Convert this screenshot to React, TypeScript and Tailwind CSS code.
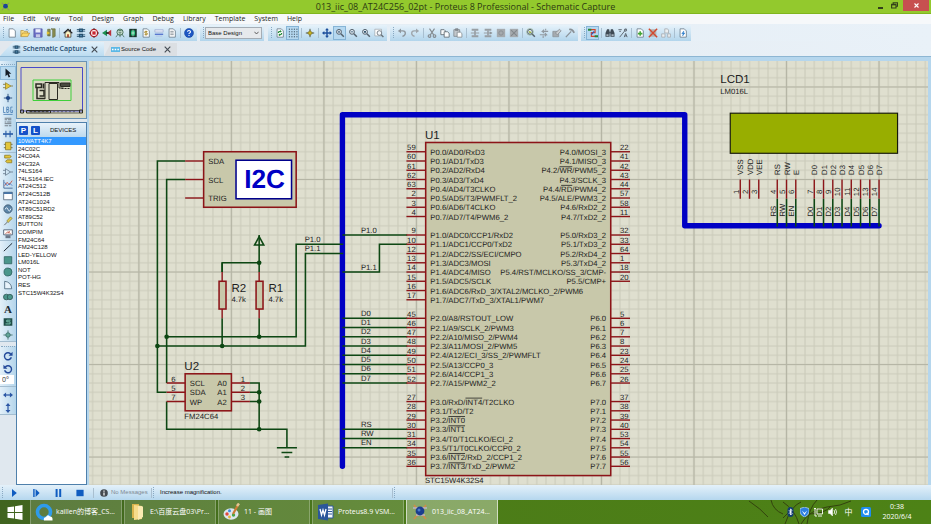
import type { ReactNode } from "react";
import clsx from "clsx";

/* ---------- small drawings, all on a 12 x 12 grid ---------- */

const page = (
  <path d="M2.5 1h5l2.5 2.5V11h-7.5z" fill="#fff" stroke="#5d6f80" strokeWidth="0.9" />
);

const lens = (
  <g fill="none" stroke="#55616c">
    <circle cx="4.8" cy="4.6" r="2.9" strokeWidth="1.2" fill="#e4eef6" />
    <path d="M7 7l3.6 3.6" strokeWidth="1.8" />
  </g>
);

const chipBlue = (
  <g fill="#27506f">
    <path d="M3.5.5h5v4.500h-5zM3.500 7h5v4.500h-5z" />
    <path d="M1 1.800h10M1 3.800h10M1 8.200h10M1 10.200h10" stroke="#27506f" strokeWidth="1" />
    <path d="M5 2.800h2M5 9.200h2" stroke="#6fb1d8" />
  </g>
);

const grayBlock = (
  <g stroke="#999fa4" fill="none">
    <path d="M2 2h8M2 10h8" strokeWidth="2.400" />
    <path d="M1 6h10" strokeWidth="1.200" />
    <path d="M6 3v6" strokeWidth="2" />
  </g>
);

const art: Record<string, ReactNode> = {
  new: page,
  open: (
    <g stroke="#a8812a" strokeWidth="0.7">
      <path d="M1 10V3h3l1 1h4v2" fill="#f8de83" />
      <path d="M1 10.3L3 6h8.5L9.2 10.3z" fill="#fbd764" />
      <path d="M7 2.2q2-1.6 3 .8" fill="none" stroke="#3a7bb5" />
    </g>
  ),
  save: (
    <g>
      <path d="M1 1h10v10H1z" fill="#6b6fc4" stroke="#4a4f9c" strokeWidth="0.7" />
      <path d="M3 1.4h6v4H3z" fill="#e9ecfa" />
      <path d="M3.5 7.5h5V11h-5z" fill="#c5c8e6" />
    </g>
  ),
  exit: (
    <g>
      <path d="M2 1.5h3v8H2zM6 1h5v9l-3 1.5V2z" fill="#8b8f51" stroke="#5c5f34" strokeWidth="0.7" />
      <path d="M1 4l4 2-4 2z" fill="#e2c230" />
    </g>
  ),
  home: (
    <g>
      <path d="M2.5 6v5h7V6L6 3z" fill="#fbf3c1" stroke="#222" strokeWidth="0.8" />
      <path d="M.8 6.3L6 1.5l5.2 4.8" fill="none" stroke="#222" strokeWidth="1.3" />
      <path d="M5 7.5h2V11H5z" fill="#a13a25" />
      <path d="M8.3 1.6h1.2v2H8.3z" fill="#222" />
    </g>
  ),
  chips: chipBlue,
  pcb: (
    <g>
      <circle cx="6" cy="6" r="4.3" fill="#fff" stroke="#b5242c" strokeWidth="1.6" />
      <path d="M4 4h4v4H4z" fill="#c92530" />
      <path d="M6 0v2M6 10v2M0 6h2M10 6h2" stroke="#333" strokeWidth="1" />
    </g>
  ),
  view3d: (
    <g>
      <path d="M0 6l6-4v8z" fill="#1c8d50" />
      <path d="M6 6l5-4v8z" fill="#b9323c" />
      <path d="M5 5h3v2H5z" fill="#222" />
    </g>
  ),
  gerber: (
    <g fill="none" stroke="#47705c">
      <circle cx="6" cy="5" r="3.7" strokeWidth="1.2" fill="#dbeee0" />
      <path d="M1 11l3-4M11 11L8 7M4 3h4M4 5h4M6 5v6" strokeWidth="1" />
    </g>
  ),
  explorer: (
    <g>
      <path d="M1.5 1h9v10h-9z" fill="#16352a" />
      <path d="M3.5 3h5v6h-5z" fill="#1eb36e" />
      <path d="M6 2v8M4 6h4" stroke="#fff" strokeWidth="0.7" />
    </g>
  ),
  bom: (
    <g>
      {page}
      <path d="M7.7 4.2H5.3q-1 0-1 .9t1 .9h1.5q1 0 1 1t-1 1H4.3M6 3.2v5.8" fill="none" stroke="#a48520" />
    </g>
  ),
  source: (
    <g>
      <path d="M1 2h10v3H1z" fill="#dfe5f5" stroke="#8c99c6" strokeWidth="0.6" />
      <path d="M1 7.5h10" stroke="#4463c8" strokeWidth="1.4" />
      <path d="M2 9.7h8" stroke="#a9b7df" strokeWidth="0.8" />
    </g>
  ),
  notes: (
    <g>
      {page}
      <path d="M4 4h4M4 6h4M4 8h4" stroke="#7b848c" />
    </g>
  ),
  help: (
    <g>
      <circle cx="6" cy="6" r="5.4" fill="#1d57c4" stroke="#0d3a94" strokeWidth="0.6" />
      <path d="M4.2 4.6q.1-1.7 1.8-1.7t1.8 1.5q0 1-1 1.5t-.8 1.3M6 8.4v1.2" fill="none" stroke="#fff" strokeWidth="1.3" />
    </g>
  ),
  redraw: (
    <g>
      {page}
      <path d="M4 6q0-2 2.6-2M8 6q0 2.2-2.6 2.2" fill="none" stroke="#208a35" strokeWidth="1.3" />
      <path d="M6 2.4l2.2 1.7L6 5.5zM6 6.7L3.8 8.3 6 9.7z" fill="#208a35" />
    </g>
  ),
  grid: (
    <g fill="#4e6474">
      {[1.5, 4.5, 7.5, 10.5].map((y) =>
        [1, 4, 7, 10].map((x) => <rect key={`${x}-${y}`} x={x} y={y - 0.7} width="1.4" height="1.4" />),
      )}
    </g>
  ),
  origin: (
    <g>
      <path d="M6 1v10M1 6h10" stroke="#3b3b22" strokeWidth="1" />
      <path d="M6 3l3 3-3 3-3-3z" fill="#c5b021" stroke="#565019" strokeWidth="0.7" />
    </g>
  ),
  pan: (
    <g fill="#1c4f9c">
      <path d="M6 0l2.3 2.8H3.7zM6 12l2.3-2.8H3.7zM0 6l2.8-2.3v4.6zM12 6L9.2 3.7v4.6z" />
      <path d="M6 2v8M2 6h8" stroke="#1c4f9c" strokeWidth="1.7" />
    </g>
  ),
  zoomIn: (
    <g>
      {lens}
      <path d="M4.8 3.2V6M3.4 4.6h2.8" stroke="#34556e" strokeWidth="0.9" />
    </g>
  ),
  zoomOut: (
    <g>
      {lens}
      <path d="M3.3 4.6h3" stroke="#34556e" strokeWidth="1" />
    </g>
  ),
  zoomAll: (
    <g>
      {lens}
      <path d="M3.6 3.6h2.4v2H3.6z" fill="#34556e" />
    </g>
  ),
  zoomArea: (
    <g>
      <path d="M1 1.5h8v8H1z" fill="#fff" stroke="#98a1a8" strokeWidth="0.8" />
      <circle cx="6.5" cy="6" r="2.8" fill="#f2f6fa" stroke="#6a747c" />
      <path d="M8.5 8l2.8 2.8" stroke="#6a747c" strokeWidth="1.7" />
    </g>
  ),
  undo: (
    <g>
      <path d="M3.5 3.5h3.5q3 0 3 2.7T6.5 10" fill="none" stroke="#8e969d" strokeWidth="1.6" />
      <path d="M1 3.5L4.8.7v5.6z" fill="#8e969d" />
    </g>
  ),
  redo: (
    <g>
      <path d="M8.5 3.5H5q-3 0-3 2.7T5.5 10" fill="none" stroke="#9fa6ac" strokeWidth="1.6" />
      <path d="M11 3.5L7.2.7v5.6z" fill="#9fa6ac" />
    </g>
  ),
  cut: (
    <g fill="none" stroke="#83898e" strokeWidth="1.3">
      <path d="M3 .8l5 7.5M9 .8L4 8.3" />
      <circle cx="3" cy="9.6" r="1.6" />
      <circle cx="9" cy="9.6" r="1.6" />
    </g>
  ),
  copy: (
    <g fill="#fafcfd" stroke="#525b63" strokeWidth="0.9">
      <path d="M1 2h4l1.5 1.5V8H1z" />
      <path d="M5 4.5h4L11 6.3V11H5z" />
    </g>
  ),
  paste: (
    <g stroke="#7b8288" strokeWidth="0.9">
      <path d="M1 2h7v8H1z" fill="#c3c8cc" />
      <path d="M3 .9h3v2H3z" fill="#8b9197" />
      <path d="M5 5h4l1.7 1.6V11H5z" fill="#fff" />
    </g>
  ),
  block: grayBlock,
  blockMove: (
    <g>
      {grayBlock}
      <path d="M8 4l3 2-3 2z" fill="#8d9398" />
    </g>
  ),
  blockTurn: (
    <g>
      <path d="M1 1h10v10H1z" fill="#a5aaae" />
      <circle cx="6" cy="6" r="2.6" fill="none" stroke="#8c9196" strokeWidth="1.2" />
    </g>
  ),
  blockDelete: (
    <g>
      <path d="M1 1h10v10H1z" fill="#a5aaae" />
      <path d="M2.5 2.5l7 7M9.500 2.500l-7 7" stroke="#83888c" strokeWidth="1.3" />
    </g>
  ),
  pick: (
    <g>
      {lens}
      <path d="M3 3.7l4 1-2.5 2z" fill="#92a928" />
      <circle cx="4.800" cy="4.600" r="4" fill="none" stroke="#74906a" strokeWidth="0.6" />
    </g>
  ),
  make: (
    <g fill="none" stroke="#9299a0" strokeWidth="1.3">
      <path d="M1 8h8l-2-2M9 8l-2 2M11 4H4l2-2M4 4l2 2" />
      <path d="M8 1v2M5 9v3" />
    </g>
  ),
  pack: (
    <g>
      <path d="M1 4h7v6.500H1z" fill="#a5abb0" stroke="#858b91" strokeWidth="0.8" />
      <path d="M4 6l5-4.500 2 2L6.500 8z" fill="#c9cdd0" stroke="#7b8187" strokeWidth="0.8" />
    </g>
  ),
  hammer: (
    <g stroke="#8a9197" fill="none">
      <path d="M1 11l6.500-7" strokeWidth="1.500" />
      <path d="M5 1.800q4-.8 6 4" strokeWidth="2" />
    </g>
  ),
  router: (
    <g fill="none">
      <path d="M3 2h5.500v3.500H4V10h5" stroke="#d2442c" strokeWidth="1.4" />
      <path d="M7.500 4L4 8" stroke="#2759bf" strokeWidth="1.4" />
      <path d="M0 1h4v2.400H0zM8 8.600h4V11H8z" fill="#268538" />
    </g>
  ),
  find: (
    <g fill="#3f4a54">
      <path d="M2.500 1.500H5l.5 3V10.500H.6V6zM9.500 1.500H7l-.5 3V10.500h4.900V6z" />
      <path d="M5 4.500h2v2H5z" />
      <path d="M1.600 7.500h2.600v2H1.600zM7.800 7.500h2.600v2H7.800z" fill="#a7b3bd" />
    </g>
  ),
  property: (
    <g fill="none" stroke="#59636c" strokeWidth="1.1">
      <path d="M.5 2h4M1.500 4h2M2 11l8-10M7.500 11l1.700-4.500L11 11M8 9.500h2.500" />
      <circle cx="9" cy="2.500" r="1.400" />
    </g>
  ),
  addSheet: (
    <g>
      {page}
      <path d="M6.200 4v5.400M3.500 6.700h5.400" stroke="#42a535" strokeWidth="1.900" />
    </g>
  ),
  removeSheet: (
    <g>
      <path d="M2 1.500h8v9H2z" fill="#b4b1b0" />
      <path d="M1 1l10 10M11 1L1 11" stroke="#d2492f" strokeWidth="1.700" />
    </g>
  ),
  parentSheet: (
    <g fill="#eceff1" stroke="#a1a7ac" strokeWidth="0.9">
      <path d="M4.500 1h3.300L9 2.500V6H4.500zM.8 7h4v4h-4zM8 7h3.300v4H8z" />
    </g>
  ),
  report: (
    <g>
      {page}
      <path d="M7 3.500L4.500 6.800h1.800L5.500 9.500 8.200 6H6.400z" fill="#2b7ccb" stroke="#2b7ccb" strokeWidth="0.600" />
    </g>
  ),
  arrow: <path d="M3 .5l7 6.500H7l1.600 3.500-1.800.9L5.300 7.800 3 10z" fill="#151d26" />,
  component: (
    <g>
      <path d="M0 4h4M0 8h4M9 6h3" stroke="#7d7443" />
      <path d="M3 2l6.500 4L3 10z" fill="#e3c63b" stroke="#8c7a20" strokeWidth="0.8" />
    </g>
  ),
  junction: (
    <g>
      <path d="M6 1v10M1 6h10" stroke="#284a7a" strokeWidth="1.100" />
      <circle cx="6" cy="6" r="2.500" fill="#1c4689" />
    </g>
  ),
  label: (
    <g fill="none" stroke="#4a80b5" strokeWidth="1">
      <path d="M.5 2v7h2.500M4.500 2.500h2q1 1.500-.5 3H4.500zM4.500 5.500h2.300q1 1.700-.5 3.500H4.500zM11.500 2.500H9.300v6.500h2.200V6.500h-1M.5 11.300h11" />
    </g>
  ),
  script: (
    <path d="M2 1.500h8M2 3.300h3M6 3.300h4M2 6h2M5 6h5M2 8h8M2 10.500h4M7 10.500h3" stroke="#6d7780" strokeWidth="1.100" />
  ),
  bus: (
    <g stroke="#2c5ea8" fill="none">
      <path d="M0 6h12" strokeWidth="2" />
      <path d="M3.500 2v8M8.500 2v8" strokeWidth="1.300" />
    </g>
  ),
  subcircuit: (
    <g>
      <path d="M3 1.500h6.500v9H3z" fill="#e2c53a" stroke="#8b7722" strokeWidth="0.9" />
      <path d="M1 4h2M1 8h2M9.500 4h2M9.500 8h2" stroke="#6e6633" />
    </g>
  ),
  terminal: (
    <g fill="#e2c53a" stroke="#8b7722" strokeWidth="0.900">
      <path d="M2 1.500h6L10 3 8 4.800H2zM10.500 7H5L3 8.800l2 1.700h5.500z" />
    </g>
  ),
  devicePin: (
    <g fill="none" stroke="#5e7184" strokeWidth="0.900">
      <path d="M3 2l6 4-6 4zM0 4h3M0 8h3M9 6h3" />
    </g>
  ),
  graph: (
    <g fill="none">
      <path d="M1 1v10h10.500" stroke="#3a5c8d" />
      <path d="M2 8l3-4 2.500 3L11 2" stroke="#c4513e" />
      <path d="M2 4l3 4 3-3 3 3" stroke="#3e6fc4" />
    </g>
  ),
  window: (
    <g>
      <path d="M.8 1.500h10.400v9H.8z" fill="#fff" stroke="#44596e" strokeWidth="0.900" />
      <path d="M.8 1.500h10.400v2H.8z" fill="#37699f" />
    </g>
  ),
  generator: (
    <g>
      <circle cx="6" cy="6" r="5" fill="#5d86a8" stroke="#3a536b" strokeWidth="0.900" />
      <path d="M2.500 6.500q1.700-4 3.500 0t3.500-1" fill="none" stroke="#e9f3fa" strokeWidth="1.200" />
    </g>
  ),
  probe: (
    <g>
      <path d="M1.500 11l4-4" stroke="#444" strokeWidth="0.900" />
      <path d="M4.500 6l4.500-5 2 2-4.800 4.700z" fill="#e0cd55" stroke="#857634" strokeWidth="0.800" />
    </g>
  ),
  meter: (
    <g>
      <path d="M.8 1h10.400v6H.8z" fill="#fff" stroke="#47566a" />
      <path d="M3 6q3-5 6 0M6 5.500l2-3" fill="none" stroke="#ba4a36" strokeWidth="0.900" />
      <path d="M3 7.500h6V11H3z" fill="#6b7889" />
    </g>
  ),
  line: <path d="M1 11L11 1.500" stroke="#1e2b36" strokeWidth="1.200" />,
  box: <path d="M1.500 2h9v8.500h-9z" fill="#4a968b" stroke="#2a5d5b" strokeWidth="0.900" />,
  circle: <circle cx="6" cy="6" r="4.800" fill="#4a968b" stroke="#2a5d5b" strokeWidth="0.900" />,
  arc: <path d="M2 1.500v9h8.500Q10 2.500 2 1.500z" fill="#e8f3fb" stroke="#3c5a70" strokeWidth="0.900" />,
  path: (
    <g fill="#4a968b" stroke="#28504f" strokeWidth="0.900">
      <circle cx="4" cy="6" r="3.400" />
      <circle cx="8.300" cy="6" r="3.200" />
    </g>
  ),
  symbol: (
    <g>
      <path d="M.8 1.500h10.400v9H.8z" fill="#1f4d47" />
      <path d="M9 3.800H4.500v2h4v2.500H3" fill="none" stroke="#7ecdb9" strokeWidth="1.100" />
    </g>
  ),
  marker: (
    <g>
      <path d="M6 .5v11M.5 6h11" stroke="#3a6a63" />
      <circle cx="6" cy="6" r="2.700" fill="#63a598" stroke="#2a5d5b" strokeWidth="0.800" />
    </g>
  ),
  turnCw: (
    <g>
      <path d="M9.500 4A4.200 4.200 0 1 0 10 7.500" fill="none" stroke="#244a9a" strokeWidth="1.700" />
      <path d="M11.500.8v5H6.700z" fill="#244a9a" />
    </g>
  ),
  turnCcw: (
    <g>
      <path d="M2.500 4A4.200 4.200 0 1 1 2 7.500" fill="none" stroke="#244a9a" strokeWidth="1.700" />
      <path d="M.5.8v5h4.800z" fill="#244a9a" />
    </g>
  ),
  mirrorX: (
    <g fill="#2c57a5">
      <path d="M0 6l3.700-3v6zM12 6L8.300 3v6z" />
      <path d="M3 6h6" stroke="#2c57a5" strokeWidth="1.500" />
    </g>
  ),
  mirrorY: (
    <g fill="#2c57a5">
      <path d="M6 0l3 3.700H3zM6 12l3-3.700H3z" />
      <path d="M6 3v6" stroke="#2c57a5" strokeWidth="1.500" />
    </g>
  ),
};

function Icon({ name, className = "size-[10px]" }: { name: string; className?: string }) {
  return (
    <svg viewBox="0 0 12 12" className={clsx("shrink-0", className)} aria-hidden="true">
      {art[name]}
    </svg>
  );
}

/* ---------- window chrome ---------- */

function TitleBar() {
  return (
    <header className="flex h-[14px] items-start border-b border-[#7fb51d] bg-[#93c92d]">
      <div className="flex h-full w-[56px] items-center">
        <svg viewBox="0 0 12 12" className="ml-px size-[9px]">
          <path d="M1 1l10 10M11 1L1 11" stroke="#8c8f6d" strokeWidth="1.400" />
          <circle cx="6" cy="5.500" r="3.200" fill="#1d4396" />
        </svg>
      </div>
      <h1 className="flex-1 text-center text-[9px] leading-[13px] text-[#2c3a12]">
        013_iic_08_AT24C256_02pt - Proteus 8 Professional - Schematic Capture
      </h1>
      <div className="flex h-[11px] w-[56px] items-center pr-[2px]">
        <button aria-label="Minimize" className="flex h-full w-[10px] items-center justify-center pt-1">
          <span className="h-[2px] w-[5px] bg-[#33401b]" />
        </button>
        <button aria-label="Restore" className="flex h-full flex-1 items-center justify-center">
          <svg viewBox="0 0 8 8" className="size-[7px]" fill="none" stroke="#33401b" strokeWidth="1.300">
            <path d="M2.500 2V.8h5v4H6M.7 2.700h5v4.200h-5z" />
            <path d="M.7 3.200h5" />
          </svg>
        </button>
        <button aria-label="Close" className="flex h-full w-[26px] items-center justify-center bg-[#c75050]">
          <svg viewBox="0 0 6 6" className="size-[5px]" stroke="#fff" strokeWidth="1.300">
            <path d="M.6.6l4.800 4.800M5.400.6L.6 5.400" />
          </svg>
        </button>
      </div>
    </header>
  );
}

const menus = ["File", "Edit", "View", "Tool", "Design", "Graph", "Debug", "Library", "Template", "System", "Help"];

function MenuBar() {
  return (
    <nav className="flex h-[10px] items-center gap-[9px] bg-[#f6f8fa] pl-[3px] text-[7px] leading-[10px] text-[#1c1c1c]">
      {menus.map((menu) => (
        <button key={menu}>{menu}</button>
      ))}
    </nav>
  );
}

function Grip() {
  return <span className="h-[11px] w-px border-l border-dotted border-[#8aa9c2]" />;
}

function Divider() {
  return (
    <span className="flex w-1 justify-center">
      <span className="h-[10px] w-px bg-[#a9bfd0]" />
    </span>
  );
}

function ToolGroup({ children }: { children: ReactNode }) {
  return (
    <div className="flex h-4 items-center bg-linear-to-b from-[#e6f2fa] to-[#b2d5ec] pr-[2px] pl-px">
      <span className="flex w-1 justify-center">
        <Grip />
      </span>
      {children}
    </div>
  );
}

function Tools({ names, active }: { names: string[]; active?: string }) {
  return names.map((name) => (
    <button
      key={name}
      aria-label={name}
      className={clsx(
        "flex h-[14px] w-[13px] items-center justify-center",
        name === active && "border border-[#86b4d6] bg-[#b5d8f0]",
      )}
    >
      <Icon name={name} />
    </button>
  ));
}

function Toolbar() {
  return (
    <div className="flex h-[17px] items-center bg-linear-to-r from-[#e2ecf4] to-[#e9f1f8]">
      <ToolGroup>
        <Tools names={["new", "open", "save", "exit"]} />
        <Divider />
        <Tools names={["home", "chips", "pcb", "view3d", "gerber", "explorer", "bom", "source", "notes"]} />
        <Divider />
        <Tools names={["help"]} />
      </ToolGroup>
      <div className="w-[3px]" />
      <ToolGroup>
        <div className="relative flex items-center">
          <select
            aria-label="Design variant"
            className="h-3 w-[57px] appearance-none border border-[#a5adb5] bg-[#e6e9ec] pl-[2px] font-[Liberation_Sans] text-[6px] leading-[10px] text-[#111]"
          >
            <option>Base Design</option>
          </select>
          <svg viewBox="0 0 6 4" className="pointer-events-none absolute right-[3px] h-1 w-[5px]" fill="none" stroke="#444">
            <path d="M.5.5L3 3.200 5.500.5" />
          </svg>
        </div>
      </ToolGroup>
      <div className="w-1" />
      <ToolGroup>
        <Tools names={["redraw", "grid"]} active="grid" />
        <Divider />
        <Tools names={["origin"]} />
        <Divider />
        <Tools names={["pan", "zoomIn", "zoomOut", "zoomAll", "zoomArea"]} active="zoomIn" />
      </ToolGroup>
      <div className="w-[3px]" />
      <ToolGroup>
        <Tools names={["undo", "redo"]} />
        <Divider />
        <Tools names={["cut", "copy", "paste"]} />
        <Divider />
        <Tools names={["block", "blockMove", "blockTurn", "blockDelete"]} />
        <Divider />
        <Tools names={["pick", "make", "pack", "hammer"]} />
      </ToolGroup>
      <div className="w-[3px]" />
      <ToolGroup>
        <Tools names={["router"]} active="router" />
        <Divider />
        <Tools names={["find", "property"]} />
        <Divider />
        <Tools names={["addSheet", "removeSheet", "parentSheet"]} />
        <Divider />
        <Tools names={["report"]} />
      </ToolGroup>
    </div>
  );
}

function CloseMark() {
  return (
    <svg viewBox="0 0 8 8" className="size-[7px]" stroke="#454c54" strokeWidth="1.300">
      <path d="M.8.8l6.400 6.400M7.200.8L.8 7.200" />
    </svg>
  );
}

function Tabs() {
  return (
    <div className="flex h-[15px] items-end bg-linear-to-r from-[#e2e8ee] to-[#e9f1f8]">
      <div className="flex h-[14px] w-[104px] items-center bg-linear-to-b from-[#e1f0fa] to-[#bcdcf1] pr-[6px] pl-3 [clip-path:polygon(13px_0,100%_0,100%_100%,0_100%)]">
        <Icon name="chips" className="size-[9px]" />
        <button className="flex-1 pl-[2px] text-left text-[7px] leading-[14px] font-semibold text-[#1f4a6e]">
          Schematic Capture
        </button>
        <button aria-label="Close Schematic Capture">
          <CloseMark />
        </button>
      </div>
      <div className="flex h-[13px] w-[73px] items-center bg-[#dbdfe3] pr-[6px] pl-[7px] [clip-path:polygon(7px_0,100%_0,100%_100%,0_100%)]">
        <svg viewBox="0 0 9 5" className="h-[5px] w-[9px]">
          <path d="M0 0h9v5H0z" fill="#5cb8e6" />
          <path d="M1 2.500h1.500M3.700 2.500h1.500M6.400 2.500h1.500" stroke="#fff" strokeWidth="1.400" />
        </svg>
        <button className="flex-1 pl-px text-left font-[Liberation_Sans] text-[6px] leading-[13px] whitespace-nowrap text-[#111]">
          Source Code
        </button>
        <button aria-label="Close Source Code">
          <CloseMark />
        </button>
      </div>
    </div>
  );
}

/* ---------- left side ---------- */

function ModeGroup({ names, className, active }: { names: string[]; className: string; active?: string }) {
  return (
    <div className={clsx("flex flex-col border-b border-[#a3bdd0]", className)}>
      {names.map((name) => (
        <button
          key={name}
          aria-label={name}
          className={clsx(
            "flex min-h-0 flex-1 items-center justify-center",
            name === active && "border border-[#8fbcdc] bg-[#b9daf0]",
          )}
        >
          {name === "text" ? (
            <span className="font-[Liberation_Serif] text-[11px] leading-none font-bold text-[#1d2a33]">A</span>
          ) : (
            <Icon name={name} />
          )}
        </button>
      ))}
    </div>
  );
}

function ModeBar() {
  return (
    <div className="w-4 bg-[#e0e8ef]">
      <div className="bg-linear-to-r from-[#e3f0f9] to-[#b4d5eb] pt-[3px]">
        <div className="mx-px border-t border-dotted border-[#8aa9c2] pt-px" />
        <ModeGroup
          className="h-[87px]"
          active="arrow"
          names={["arrow", "component", "junction", "label", "script", "bus", "subcircuit"]}
        />
        <ModeGroup
          className="h-[88px]"
          names={["terminal", "devicePin", "graph", "window", "generator", "probe", "meter"]}
        />
        <ModeGroup className="h-[101px]" names={["line", "box", "circle", "arc", "path", "text", "symbol", "marker"]} />
      </div>
      <div className="mt-1 bg-linear-to-r from-[#e3f0f9] to-[#b4d5eb]">
        <div className="mx-px border-t border-dotted border-[#8aa9c2] pt-[3px]" />
        <ModeGroup className="h-[25px] border-b-0" names={["turnCw", "turnCcw"]} />
        <input
          aria-label="Rotation angle"
          defaultValue="0°"
          className="block h-[9px] w-[14px] bg-white pl-[2px] text-[7px] leading-[9px] text-[#333]"
        />
        <div className="mt-[2px] border-t border-[#a3bdd0] pt-[2px]" />
        <ModeGroup className="h-[26px]" names={["mirrorX", "mirrorY"]} />
      </div>
    </div>
  );
}

const devices = [
  "10WATT4K7",
  "24C02C",
  "24C04A",
  "24C32A",
  "74LS164",
  "74LS164.IEC",
  "AT24C512",
  "AT24C512B",
  "AT24C1024",
  "AT89C51RD2",
  "AT89C52",
  "BUTTON",
  "COMPIM",
  "FM24C64",
  "FM24C128",
  "LED-YELLOW",
  "LM016L",
  "NOT",
  "POT-HG",
  "RES",
  "STC15W4K32S4",
];

function Overview() {
  return (
    <div className="h-[58px] border border-[#6a93b5] bg-[#dadac5]">
      <svg viewBox="0 0 68 56" className="block size-full">
        <path d="M3.500 5.500h61.500v43.500H3.500z" fill="none" stroke="#4a4ac8" />
        <path d="M15.500 18h38v20.500h-38z" fill="none" stroke="#3fd03a" />
        <g fill="none" stroke="#2a2a22">
          <path d="M31.500 21.500h8.500v16h-8.500zM27.500 37V20.500h14v5.500H46" />
          <path d="M18.500 22h5.500v3.500h-5.500zM19.500 26v10.500h8M22 28.500h4.500v5.500h-4.500M26 21.500v5" strokeWidth="1.500" />
          <path d="M43 21h9.500v3.500H43z" fill="#4a4a40" />
          <path d="M44 26.500h8" strokeDasharray="2 1" />
          <path d="M3 48h3v3H3zM9 48.500h24v2.500H9zM62 48h3v3h-3z" />
          <path d="M12 49.700h20" strokeDasharray="3 1" />
          <path d="M33 48.500h29M33 51h29" strokeWidth="0.700" />
          <path d="M36 49.700h24" strokeDasharray="1 3" />
        </g>
      </svg>
    </div>
  );
}

function SidePanel() {
  return (
    <aside className="flex w-[71px] flex-col gap-[3px] font-[Liberation_Sans]">
      <Overview />
      <section className="flex flex-1 flex-col border border-[#4f80ab] bg-white">
        <div className="flex h-[14px] items-center bg-linear-to-b from-[#e8f2fa] to-[#bcd9ee] pl-[2px]">
          <button className="size-[9px] rounded-[1px] bg-[#1450c8] text-[8px] leading-[9px] font-bold text-white">P</button>
          <button className="ml-[3px] size-[9px] rounded-[1px] bg-[#1450c8] text-[8px] leading-[9px] font-bold text-white">
            L
          </button>
          <h2 className="ml-[10px] text-[6px] text-[#111]">DEVICES</h2>
        </div>
        <ul className="flex h-[159px] flex-col text-[6px] leading-[8px] text-[#111]">
          {devices.map((device, i) => (
            <li key={device} className={clsx("min-h-0 flex-1 pl-px", i === 0 && "bg-[#3399ff] text-white")}>
              {device}
            </li>
          ))}
        </ul>
      </section>
    </aside>
  );
}

/* ---------- schematic: one grid step is 12 units ---------- */

const WIRE = "#0d4713";
const PIN = "#8c1418";
const BODY = "#c8c8aa";
const BUS = "#0000c4";

// "~" toggles the overline of active-low names
const leftPins: [string, string][][] = [
  [
    ["59", "P0.0/AD0/RxD3"],
    ["60", "P0.1/AD1/TxD3"],
    ["61", "P0.2/AD2/RxD4"],
    ["62", "P0.3/AD3/TxD4"],
    ["63", "P0.4/AD4/T3CLKO"],
    ["2", "P0.5/AD5/T3/PWMFLT_2"],
    ["3", "P0.6/AD6/T4CLKO"],
    ["4", "P0.7/AD7/T4/PWM6_2"],
  ],
  [
    ["9", "P1.0/ADC0/CCP1/RxD2"],
    ["10", "P1.1/ADC1/CCP0/TxD2"],
    ["12", "P1.2/ADC2/SS/ECI/CMPO"],
    ["13", "P1.3/ADC3/MOSI"],
    ["14", "P1.4/ADC4/MISO"],
    ["15", "P1.5/ADC5/SCLK"],
    ["16", "P1.6/ADC6/RxD_3/XTAL2/MCLKO_2/PWM6"],
    ["17", "P1.7/ADC7/TxD_3/XTAL1/PWM7"],
  ],
  [
    ["45", "P2.0/A8/RSTOUT_LOW"],
    ["46", "P2.1/A9/SCLK_2/PWM3"],
    ["47", "P2.2/A10/MISO_2/PWM4"],
    ["48", "P2.3/A11/MOSI_2/PWM5"],
    ["49", "P2.4/A12/ECI_3/SS_2/PWMFLT"],
    ["50", "P2.5/A13/CCP0_3"],
    ["51", "P2.6/A14/CCP1_3"],
    ["52", "P2.7/A15/PWM2_2"],
  ],
  [
    ["27", "P3.0/RxD/~INT4~/T2CLKO"],
    ["28", "P3.1/TxD/T2"],
    ["29", "P3.2/~INT0~"],
    ["30", "P3.3/~INT1~"],
    ["31", "P3.4/T0/T1CLKO/ECI_2"],
    ["34", "P3.5/T1/T0CLKO/CCP0_2"],
    ["35", "P3.6/~INT2~/RxD_2/CCP1_2"],
    ["36", "P3.7/~INT3~/TxD_2/PWM2"],
  ],
];

const rightPins: [string, string][][] = [
  [
    ["22", "P4.0/MOSI_3"],
    ["41", "P4.1/MISO_3"],
    ["42", "P4.2/~WR~/PWM5_2"],
    ["43", "P4.3/SCLK_3"],
    ["44", "P4.4/~RD~/PWM4_2"],
    ["57", "P4.5/ALE/PWM3_2"],
    ["58", "P4.6/RxD2_2"],
    ["11", "P4.7/TxD2_2"],
  ],
  [
    ["32", "P5.0/RxD3_2"],
    ["33", "P5.1/TxD3_2"],
    ["64", "P5.2/RxD4_2"],
    ["1", "P5.3/TxD4_2"],
    ["18", "P5.4/RST/MCLKO/SS_3/CMP-"],
    ["20", "P5.5/CMP+"],
  ],
  [
    ["5", "P6.0"],
    ["6", "P6.1"],
    ["7", "P6.2"],
    ["8", "P6.3"],
    ["23", "P6.4"],
    ["24", "P6.5"],
    ["25", "P6.6"],
    ["26", "P6.7"],
  ],
  [
    ["37", "P7.0"],
    ["38", "P7.1"],
    ["39", "P7.2"],
    ["40", "P7.3"],
    ["53", "P7.4"],
    ["54", "P7.5"],
    ["55", "P7.6"],
    ["56", "P7.7"],
  ],
];

const pinY = (port: number, i: number) => 204 + (port * 9 + i) * 12;

function PinName({ name }: { name: string }) {
  return name.split("~").map((part, i) =>
    i % 2 ? (
      <tspan key={i} className="overline">
        {part}
      </tspan>
    ) : (
      part
    ),
  );
}

function Microcontroller() {
  return (
    <g>
      <rect x="492" y="192" width="240" height="432" fill={BODY} stroke={PIN} strokeWidth="2" />
      <text x="491" y="188" fontSize="15">
        U1
      </text>
      <text x="491" y="633">
        STC15W4K32S4
      </text>
      {leftPins.map((port, p) =>
        port.map(([num, name], i) => (
          <g key={num}>
            <path d={`M467 ${pinY(p, i)}h25`} stroke={PIN} strokeWidth="1.800" />
            <text x="479" y={pinY(p, i) - 2} textAnchor="end">
              {num}
            </text>
            <text x="498" y={pinY(p, i) + 4}>
              <PinName name={name} />
            </text>
          </g>
        )),
      )}
      {rightPins.map((port, p) =>
        port.map(([num, name], i) => (
          <g key={num}>
            <path d={`M732 ${pinY(p, i)}h25`} stroke={PIN} strokeWidth="1.800" />
            <text x="744" y={pinY(p, i) - 2}>
              {num}
            </text>
            <text x="726" y={pinY(p, i) + 4} textAnchor="end">
              <PinName name={name} />
            </text>
          </g>
        )),
      )}
    </g>
  );
}

function Resistor({ x, name, end }: { x: number; name: string; end: number }) {
  return (
    <g>
      <path d={`M${x} 348v12M${x} 420V${end}`} stroke={WIRE} strokeWidth="2" />
      <path d={`M${x} 360v60`} stroke={PIN} strokeWidth="1.800" />
      <rect x={x - 4} y="372" width="9" height="36" fill={BODY} stroke={PIN} strokeWidth="2" />
      <text x={x + 12} y="386" fontSize="15">
        {name}
      </text>
      <text x={x + 12} y="399">
        4.7k
      </text>
    </g>
  );
}

function Debugger() {
  return (
    <g>
      <rect x="204" y="204" width="120" height="72" fill={BODY} stroke={PIN} strokeWidth="2" />
      <rect x="246" y="215" width="72" height="50" fill="#fff" stroke="#00008c" strokeWidth="2" />
      <text x="283" y="251" fontSize="34" fontWeight="bold" fill={BUS} textAnchor="middle">
        I2C
      </text>
      {["SDA", "SCL", "TRIG"].map((name, i) => (
        <g key={name}>
          <path d={`M180 ${216 + i * 24}h24`} stroke={PIN} strokeWidth="1.800" />
          <text x="210" y={220 + i * 24}>
            {name}
          </text>
        </g>
      ))}
    </g>
  );
}

function Memory() {
  const rows = [
    ["6", "SCL", "A0", "1"],
    ["5", "SDA", "A1", "2"],
    ["7", "WP", "A2", "3"],
  ];
  return (
    <g>
      <rect x="180" y="492" width="60" height="48" fill={BODY} stroke={PIN} strokeWidth="2" />
      <text x="179" y="487" fontSize="15">
        U2
      </text>
      <text x="179" y="550">
        FM24C64
      </text>
      {rows.map(([left, a, b, right], i) => (
        <g key={left}>
          <path d={`M156 ${504 + i * 12}h24M240 ${504 + i * 12}h24`} stroke={PIN} strokeWidth="1.800" />
          <text x="162" y={502 + i * 12}>
            {left}
          </text>
          <text x="186" y={508 + i * 12}>
            {a}
          </text>
          <text x="234" y={508 + i * 12} textAnchor="end">
            {b}
          </text>
          <text x="252" y={502 + i * 12}>
            {right}
          </text>
        </g>
      ))}
    </g>
  );
}

const lcdPins = [
  { x: 900, name: "VSS" },
  { x: 912, name: "VDD" },
  { x: 924, name: "VEE" },
  { x: 948, name: "RS", net: "RS" },
  { x: 960, name: "RW", net: "RW" },
  { x: 972, name: "E", net: "EN" },
  ...[0, 1, 2, 3, 4, 5, 6, 7].map((n) => ({ x: 996 + n * 12, name: `D${n}`, net: `D${n}` })),
];

function Display() {
  return (
    <g>
      <text x="874" y="115" fontSize="15">
        LCD1
      </text>
      <text x="874" y="129">
        LM016L
      </text>
      <rect x="887" y="154" width="217" height="52" fill="#98ae00" stroke="#15180a" strokeWidth="1.500" />
      {lcdPins.map(({ x, name, net }, i) => (
        <g key={name}>
          <path d={`M${x} 240v25`} stroke={PIN} strokeWidth="1.800" />
          {net && <path d={`M${x} 265v36`} stroke={WIRE} strokeWidth="2" />}
          <text transform={`translate(${x + 4} 234) rotate(-90)`}>{name}</text>
          <text transform={`translate(${x - 2} 256) rotate(-90)`} textAnchor="middle">
            {i + 1}
          </text>
          {net && <text transform={`translate(${x - 2} 288) rotate(-90)`}>{net}</text>}
        </g>
      ))}
    </g>
  );
}

const busNets = [
  ...[0, 1, 2, 3, 4, 5, 6, 7].map((n) => ({ name: `D${n}`, y: pinY(2, n) })),
  { name: "RS", y: pinY(3, 3) },
  { name: "RW", y: pinY(3, 4) },
  { name: "EN", y: pinY(3, 5) },
];

const nodes = [
  [276, 348],
  [156, 444],
  [276, 444],
  [144, 456],
  [228, 456],
  [276, 516],
  [276, 528],
  [276, 564],
];

function Schematic() {
  return (
    <svg
      viewBox="55.3 86.3 1088.2 560"
      preserveAspectRatio="xMinYMin slice"
      className="absolute inset-0 size-full font-[Liberation_Sans]"
      fontSize="10"
      fill="#1d1d1d"
      textRendering="geometricPrecision"
    >
      <defs>
        <pattern id="minor" width="12" height="12" x="-6" y="-6" patternUnits="userSpaceOnUse">
          <path d="M6 0v12M0 6h12" stroke="#cacab9" strokeWidth="1.300" />
        </pattern>
        <pattern id="major" width="120" height="120" x="-60" y="-60" patternUnits="userSpaceOnUse">
          <path d="M60 0v120M0 60h120" stroke="#b5b5a5" strokeWidth="1.600" />
        </pattern>
      </defs>
      <rect width="1400" height="800" fill="#dfdfcf" />
      <rect width="1400" height="800" fill="url(#minor)" />
      <rect width="1400" height="800" fill="url(#major)" />

      <path
        d="M384 612V156H828V300H1080"
        fill="none"
        stroke={BUS}
        strokeWidth="7"
        strokeLinecap="round"
        strokeLinejoin="round"
      />

      <g fill="none" stroke={WIRE} strokeWidth="2">
        <path d="M180 216H144V516H156" />
        <path d="M180 240H156V504" />
        <path d="M385 324H324V444H156" />
        <path d="M385 336H336V456H144" />
        <path d="M384 312H468" />
        <path d="M468 324H432V360H384" />
        <path d="M276 312V348H228V360" />
        <path d="M276 314L270 325H282Z" />
        <path d="M264 504H276V564M264 516H276M264 528H276" />
        <path d="M156 528V564H312V588M299 588H325M305 594H319M309 600H315" />
        {busNets.map(({ name, y }) => (
          <path key={name} d={`M384 ${y}H468`} />
        ))}
      </g>

      <Debugger />
      <Resistor x={228} name="R2" end={456} />
      <Resistor x={276} name="R1" end={444} />
      <Memory />
      <Microcontroller />
      <Display />

      {nodes.map(([x, y]) => (
        <circle key={`${x}-${y}`} cx={x} cy={y} r="3" fill={WIRE} />
      ))}

      <text x="335" y="321">
        P1.0
      </text>
      <text x="335" y="333">
        P1.1
      </text>
      <text x="408" y="309">
        P1.0
      </text>
      <text x="408" y="357">
        P1.1
      </text>
      {busNets.map(({ name, y }) => (
        <text key={name} x="408" y={y - 3}>
          {name}
        </text>
      ))}
    </svg>
  );
}

/* ---------- bottom ---------- */

function SimulationBar() {
  return (
    <div className="flex h-[15px] items-center bg-linear-to-b from-[#e4f1fa] to-[#b5d7ee] pl-[2px] font-[Liberation_Sans] text-[6px]">
      <Grip />
      <div className="flex w-[88px] items-center justify-around">
        {[
          ["Play", "M2 0l6 5-6 5z"],
          ["Step", "M1 0h1.800v10H1zM4 0l5 5-5 5z"],
          ["Pause", "M1.500 0h2.500v10H1.500zM6 0h2.500v10H6z"],
          ["Stop", "M0 1h9v8H0z"],
        ].map(([name, d]) => (
          <button key={name} aria-label={name}>
            <svg viewBox="0 0 9 10" className="h-[8px] w-[8px]" fill="#0f5cc0">
              <path d={d} />
            </svg>
          </button>
        ))}
      </div>
      <Divider />
      <svg viewBox="0 0 10 10" className="ml-[5px] size-[8px]">
        <circle cx="5" cy="5" r="4.800" fill="#454a50" />
        <path d="M5 4.300V8M5 2v1.300" stroke="#fff" strokeWidth="1.500" />
      </svg>
      <span className="ml-[3px] w-[38px] whitespace-nowrap text-[#7f8a93]">No Messages</span>
      <Divider />
      <Grip />
      <span className="ml-[6px] w-[230px] text-[#111]">Increase magnification.</span>
      <Divider />
      <Grip />
    </div>
  );
}

const tasks: { title: string; icon: ReactNode; active?: boolean }[] = [
  {
    title: "kaillen的博客_CS...",
    icon: (
      <>
        <circle cx="9" cy="9" r="6.500" fill="none" stroke="#2f9bea" strokeWidth="3.600" />
        <path d="M9 17.500q-1-3 2-3.500 1.500-3 4-.5 3 0 2.500 4z" fill="#fff" />
      </>
    ),
  },
  {
    title: "E:\\百度云盘03\\Pr...",
    icon: (
      <>
        <path d="M3 1h7v14H3z" fill="#d9b44c" />
        <path d="M5 2l8 1v13l-8 1z" fill="#f6dc8b" />
        <path d="M9 3l5 .5V14l-5 3z" fill="#fbeab2" />
      </>
    ),
  },
  {
    title: "11 - 画图",
    icon: (
      <>
        <ellipse cx="8" cy="11" rx="7.500" ry="5.800" fill="#dbe6ee" />
        <circle cx="4" cy="11" r="1.700" fill="#e0483c" />
        <circle cx="6.500" cy="7.800" r="1.500" fill="#3f8fe0" />
        <circle cx="10.500" cy="12" r="1.700" fill="#44a548" />
        <circle cx="6.500" cy="14" r="1.400" fill="#e9b530" />
        <path d="M10 11l5-9" stroke="#cd7b34" strokeWidth="2.200" />
        <path d="M14 3l2-2.500" stroke="#e6c590" strokeWidth="2.500" />
      </>
    ),
  },
  {
    title: "Proteus8.9 VSM...",
    icon: (
      <>
        <path d="M8 3h8v12H8z" fill="#f5f8fc" stroke="#2b579a" />
        <path d="M11 6h4M11 8.500h4M11 11h4" stroke="#2b579a" />
        <path d="M1 2l10-1.500v17L1 16z" fill="#2b579a" />
        <path d="M3 6l1.500 6L6 7l1.500 5L9 6" fill="none" stroke="#fff" strokeWidth="1.300" />
      </>
    ),
  },
  {
    title: "013_iic_08_AT24...",
    active: true,
    icon: (
      <>
        <path d="M3 2l12 14M15 2L3 16" stroke="#d08c48" strokeWidth="1.700" />
        <path d="M2 5h14M5 12h9" stroke="#b9b3c6" strokeWidth="1.300" />
        <circle cx="9" cy="8" r="4.400" fill="#1a3e8f" />
        <circle cx="8" cy="7" r="1.500" fill="#4a7acb" />
      </>
    ),
  },
];

function Tray() {
  return (
    <div className="flex items-center gap-[5px]">
      <svg viewBox="0 0 9 10" className="h-[10px] w-[9px]" fill="none">
        <rect x="1.500" width="6" height="10" rx="3" fill="#123d73" />
        <path d="M3 3.300l3 3.300L4.600 8V2L6 3.400 3 6.700" stroke="#fff" strokeWidth="0.900" />
      </svg>
      <svg viewBox="0 0 9 10" className="h-[10px] w-[9px]">
        <path d="M4.500 0L9 1.500V5Q8.500 8.500 4.500 10 .5 8.500 0 5V1.500z" fill="#2c7fe0" stroke="#dcebfa" strokeWidth="0.600" />
        <path d="M1.800 3.500L4.500 6l2.700-2.500L4.500 8z" fill="#fff" />
      </svg>
      <svg viewBox="0 0 9 10" className="h-[10px] w-[9px]" fill="none" stroke="#fff">
        <path d="M3 2h5.500v5H3zM1 1v4.500M0 1.500h2M4 9h4M1 5.500V9h2" strokeWidth="0.900" />
      </svg>
      <svg viewBox="0 0 9 10" className="h-[10px] w-[9px]" fill="none" stroke="#fff">
        <path d="M.5 3.500h1.500L4.500 1v8L2 6.500H.5z" fill="#fff" strokeWidth="0.500" />
        <path d="M6 3q1.300 2 0 4M7.500 2q2 3 0 6" strokeWidth="0.800" />
      </svg>
      <span className="w-[13px] text-center text-[8px]">中</span>
      <svg viewBox="0 0 10 10" className="ml-px size-[10px]">
        <rect width="10" height="10" rx="1.500" fill="#1e8df0" />
        <circle cx="5" cy="4.800" r="2.500" fill="none" stroke="#fff" strokeWidth="1.300" />
        <path d="M5.500 6l2 2" stroke="#fff" strokeWidth="1.300" />
      </svg>
    </div>
  );
}

function Taskbar() {
  return (
    <footer className="relative flex h-6 bg-linear-to-r from-[#40641f] via-[#4c7c18] to-[#4d8216] text-[7px] text-white">
      <svg viewBox="0 0 120 24" className="absolute right-[62px] h-6 w-[120px]" fill="none" stroke="#33420f">
        <path d="M0 1q12 8 19 16M22 0q2 10 12 14M36 24q6-18 16-22M50 24Q46 10 34 2M52 24q8-14 26-17 14-1 24-6M60 14q16 0 22-8M40 12l-6 6M68 0q-8 8-10 24" />
      </svg>
      <button aria-label="Start" className="flex w-[29px] items-center justify-center">
        <svg viewBox="0 0 16 16" className="h-[15px] w-4" fill="#fff">
          <path d="M0 2.500l7-1v6H0zM8 1.300L16 0v7.500H8zM0 8.500h7v6l-7-1zM8 8.500h8V16l-8-1.300z" />
        </svg>
      </button>
      <div className="flex gap-[2px] pl-px">
        {tasks.map(({ title, icon, active }) => (
          <button
            key={title}
            className={clsx(
              "flex w-[92px] items-center gap-[3px] border-x pl-1 text-left whitespace-nowrap",
              active ? "border-white/60 bg-white/35" : "border-white/25 bg-white/15",
            )}
          >
            <svg viewBox="0 0 18 18" className="size-[18px] shrink-0">
              {icon}
            </svg>
            {title}
          </button>
        ))}
      </div>
      <div className="relative ml-auto flex items-center gap-[10px] pr-[18px]">
        <Tray />
        <div className="w-[32px] text-center leading-[10px]">
          <p>0:38</p>
          <p>2020/6/4</p>
        </div>
      </div>
    </footer>
  );
}

export default function App() {
  return (
    <div className="flex h-screen flex-col overflow-hidden bg-[#e0e8ef] font-['Open_Sans','Noto_Sans_CJK_SC',sans-serif]">
      <TitleBar />
      <MenuBar />
      <Toolbar />
      <Tabs />
      <div className="h-[5px] border-t border-[#8db6d3] bg-[#b5d6ed]" />
      <main className="flex min-h-0 flex-1">
        <ModeBar />
        <SidePanel />
        <div className="flex flex-1 bg-[#b5d6ed] pr-[3px] pl-[2px]">
          <div className="relative flex-1 overflow-hidden">
            <Schematic />
          </div>
        </div>
      </main>
      <SimulationBar />
      <Taskbar />
    </div>
  );
}
